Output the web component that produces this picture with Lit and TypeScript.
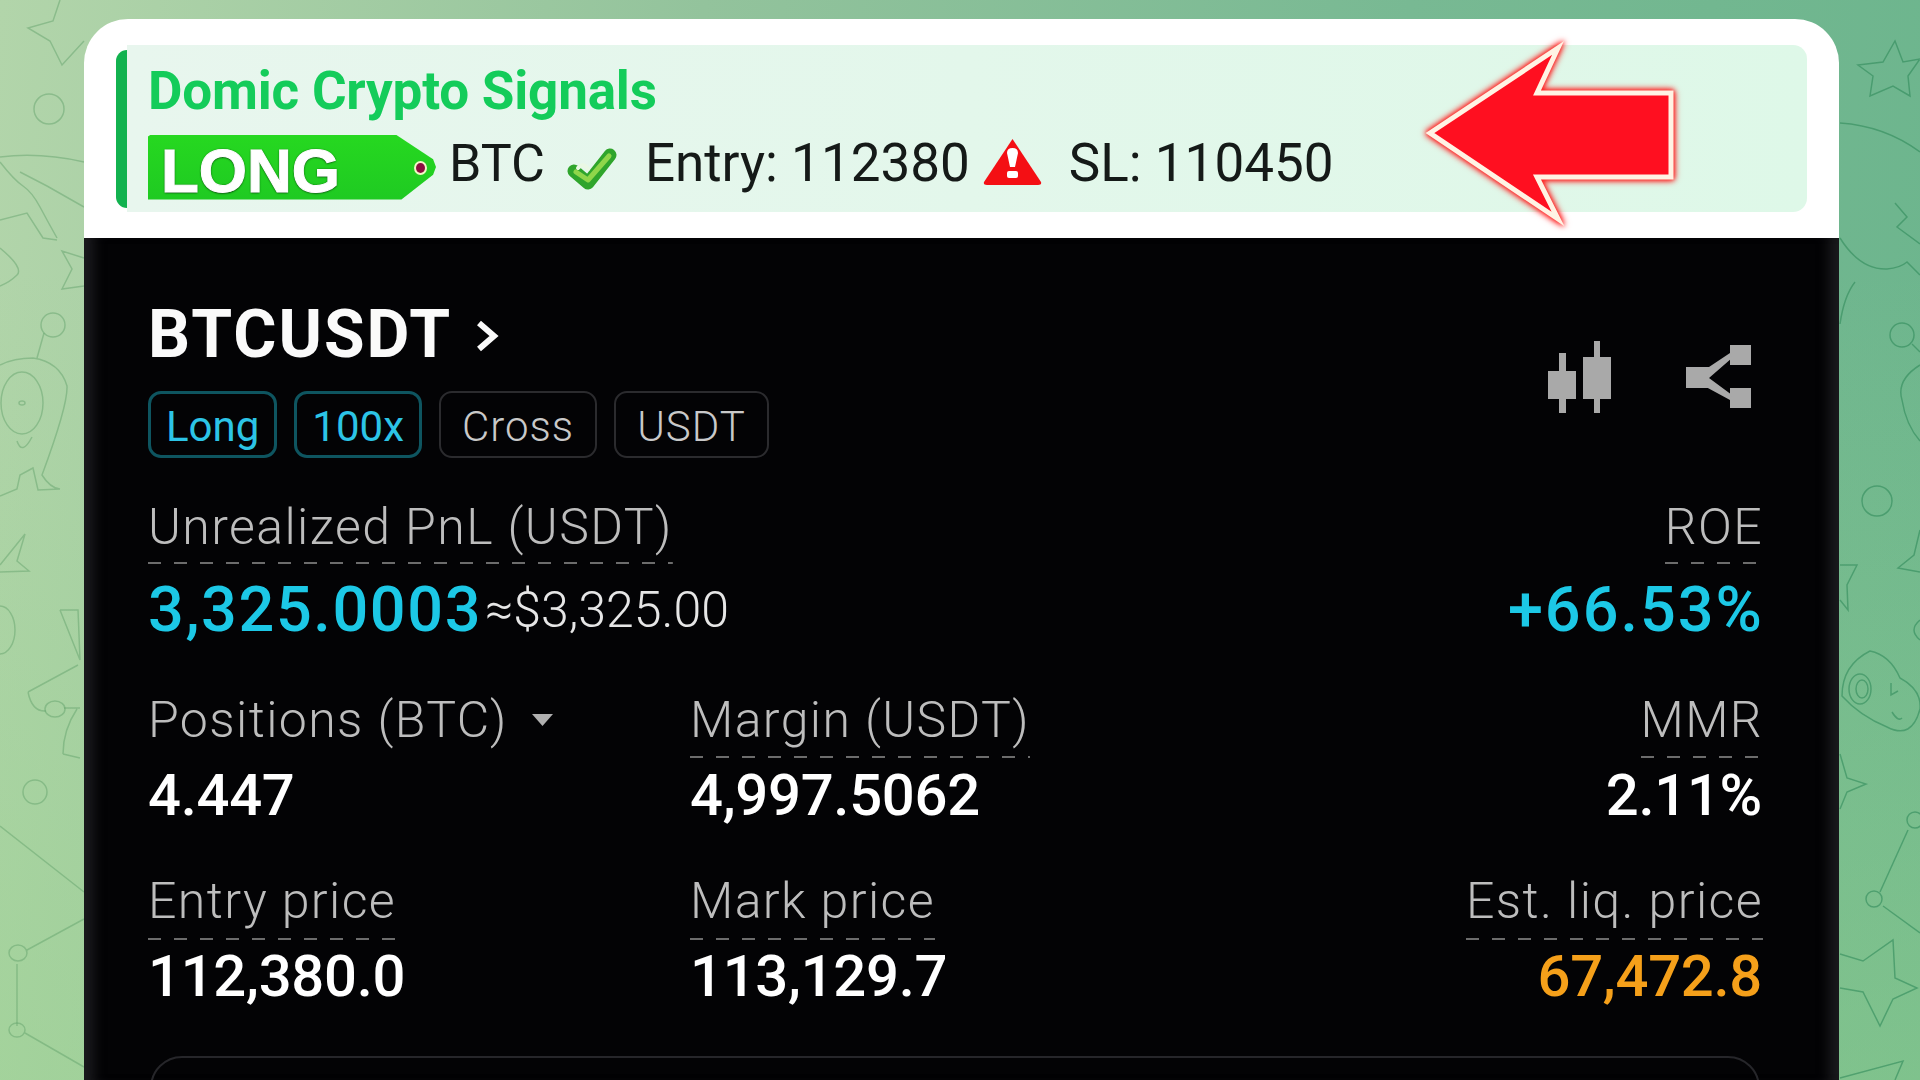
import { LitElement, html, css, svg } from "lit";
import { customElement } from "lit/decorators.js";

// hand traced doodles of the chat wallpaper, only the strips beside the card show
const doodleLines = [
  "M60 0 53 21 28 28 50 41 62 65 84 41",
  "M0 157Q40 152 84 162",
  "M0 162Q14 180 23 186T40 207 57 238",
  "M20 172 47 186 84 207",
  "M0 220 27 213 43 238 57 240",
  "M0 248Q24 268 17 275T0 286",
  "M84 258 62 251 72 269 62 289 84 286",
  "M44 333 37 358",
  "M0 365Q14 358 33 358 60 362 67 386 68 405 42 475 50 488 60 489L38 490 33 468 20 475 17 489 0 496",
  "M17 441Q22 456 32 437",
  "M0 565 25 534 17 561 29 571 0 572",
  "M60 610H78L80 660 60 610",
  "M28 692 78 665M28 692Q32 712 46 711M64 708H80M63 754Q63 730 77 709M63 754 80 758",
  "M0 826 84 892",
  "M27 950 84 919",
  "M17 964V1026",
  "M25 1033 84 1067",
  "M1858 65 1883 62 1895 41 1903 62 1920 59 1908 76 1910 96 1893 86 1870 96 1873 76Z",
  "M1840 123Q1885 126 1920 152",
  "M1895 203 1907 217 1897 227 1920 244",
  "M1840 238Q1860 270 1887 269 1900 268 1907 262L1920 275",
  "M1840 324Q1844 296 1855 282",
  "M1912 344 1920 352",
  "M1920 365Q1896 380 1902 400 1906 425 1920 441",
  "M1840 565H1857L1847 585 1848 610 1840 600",
  "M1920 530 1914 555 1898 568 1920 572",
  "M1920 620Q1908 630 1920 640",
  "M1842 696Q1842 665 1870 651 1890 655 1900 678 1922 690 1920 709 1912 740 1887 727 1860 716 1842 696Z",
  "M1891 683V695L1898 691M1892 712Q1898 722 1902 718",
  "M1840 754 1847 778 1866 784 1847 792 1840 809",
  "M1908 830 1880 892",
  "M1883 906 1920 933",
  "M1840 954 1863 961 1893 940 1895 978 1917 988 1893 999 1880 1026 1863 992 1840 988",
  "M1840 1078 1903 1061 1895 1080",
];

const doodleRings = [
  [49, 109, 15, 15],
  [53, 325, 12, 12],
  [22, 403, 21, 31],
  [22, 403, 3, 2],
  [0, 630, 15, 24],
  [55, 709, 10, 8],
  [35, 792, 12, 12],
  [18, 953, 9, 8],
  [17, 1030, 8, 7],
  [1902, 335, 12, 12],
  [1877, 501, 15, 15],
  [1860, 689, 11, 15],
  [1862, 689, 6, 9],
  [1915, 820, 8, 8],
  [1874, 899, 8, 8],
];

const chips = [
  { text: "Long", active: true },
  { text: "100x", active: true },
  { text: "Cross", active: false },
  { text: "USDT", active: false },
];

@customElement("app-root")
export class AppRoot extends LitElement {
  static styles = css`
    :host {
      display: block;
      position: relative;
      width: 1920px;
      height: 1080px;
      overflow: hidden;
      box-sizing: border-box;
      padding: 19px 81px 0 84px;
      font-family: Roboto, "Liberation Sans", sans-serif;
      background:
        linear-gradient(180deg, rgba(150, 210, 140, 0) 25%, rgba(150, 210, 140, 0.45) 100%),
        linear-gradient(95deg, #b2d5aa 0%, #93c39c 35%, #78b993 70%, #6cb58d 100%);
    }
    .wallpaper {
      position: absolute;
      inset: 0;
      width: 1920px;
      height: 1080px;
      fill: none;
      stroke-width: 1.5;
    }
    .card {
      position: relative;
      height: 1061px;
      border-radius: 44px 44px 0 0;
      overflow: hidden;
      display: flex;
      flex-direction: column;
    }
    .head {
      position: relative;
      height: 219px;
      box-sizing: border-box;
      padding: 26px 32px 26px 32px;
      background: #fff;
      display: flex;
      align-items: center;
    }
    .bar {
      flex: none;
      width: 11px;
      height: 158px;
      background: #12b24f;
      border-radius: 12px 0 0 12px;
    }
    .quote {
      flex: 1;
      height: 167px;
      box-sizing: border-box;
      padding: 17px 0 0 21px;
      background: linear-gradient(90deg, #e8f6ee, #def8e8);
      border-radius: 0 14px 14px 0;
    }
    .sender {
      font-size: 53px;
      line-height: 58px;
      font-weight: 700;
      color: #14cc5a;
      letter-spacing: -0.2px;
    }
    .msg {
      display: flex;
      align-items: center;
      height: 68px;
      margin-top: 9px;
      font-size: 53px;
      color: #151a18;
    }
    .tag {
      position: relative;
      flex: none;
      width: 288px;
      height: 65px;
      margin-top: 8px;
      box-sizing: border-box;
      padding: 0 0 0 13px;
      background: linear-gradient(180deg, #26d820, #1fca22);
      clip-path: polygon(0 3%, 1% 0, 86% 0, 99% 38%, 100% 50%, 99% 62%, 88% 100%, 0 100%);
      font-family: "Liberation Sans", Arial, sans-serif;
      font-size: 62px;
      line-height: 71px;
      font-weight: 700;
      color: #fff;
      -webkit-text-stroke: 1px #fff;
      text-shadow: 0 0 2px #0d4a12, 0 1px 2px #0d4a12;
    }
    .tag i {
      position: absolute;
      right: 11px;
      top: 28px;
      width: 9px;
      height: 10px;
      border-radius: 50%;
      background: #8a1040;
      box-shadow: 0 0 0 2px #f4f7c8;
    }
    .btc {
      margin-left: 13px;
      font-size: 52px;
    }
    .check {
      flex: none;
      width: 50px;
      height: 44px;
      margin: 12px 28px 0 22px;
    }
    .warn {
      flex: none;
      width: 59px;
      height: 47px;
      margin: 0 27px 4px 13px;
    }
    .arrow {
      position: absolute;
      left: 1330px;
      top: 8px;
      width: 260px;
      height: 200px;
      overflow: visible;
      filter: drop-shadow(0 0 3px #ff2020) drop-shadow(0 0 2px #ff2020);
    }
    .panel {
      flex: 1;
      box-sizing: border-box;
      padding: 54px 77px 0 64px;
      background: #030305;
      box-shadow: inset 18px 0 12px -8px #1a1a1d, inset -18px 0 12px -8px #1a1a1d;
      display: flex;
      flex-direction: column;
      position: relative;
    }
    .top {
      display: flex;
      justify-content: space-between;
    }
    .title {
      display: flex;
      align-items: center;
      height: 84px;
      font-size: 66px;
      font-weight: 700;
      color: #fafafa;
      letter-spacing: 2px;
    }
    .chev {
      width: 24px;
      height: 32px;
      margin: 4px 0 0 23px;
    }
    .chips {
      display: flex;
      gap: 17px;
      margin-top: 15px;
    }
    .chip {
      box-sizing: border-box;
      height: 67px;
      padding: 0 21px;
      border: 2px solid #2b2b2e;
      border-radius: 13px;
      font-size: 42px;
      line-height: 67px;
      font-weight: 300;
      color: #c9c9c9;
      letter-spacing: 1px;
    }
    .chip.on {
      padding: 0 15px;
      border: 3px solid #0e5560;
      line-height: 65px;
      color: #2cc4e6;
      font-weight: 400;
      letter-spacing: 0;
    }
    .tools {
      display: flex;
      gap: 75px;
      margin: 49px 11px 0 0;
    }
    .tools .share {
      margin-top: 4px;
    }
    .stats {
      display: grid;
      grid-template-columns: 542px 1fr auto;
      row-gap: 48px;
      margin-top: 43px;
    }
    .wide {
      grid-column: span 2;
    }
    .cell {
      display: flex;
      flex-direction: column;
      align-items: flex-start;
    }
    .cell.end {
      align-items: flex-end;
    }
    .cell.end .label {
      margin-right: -1px;
    }
    .label {
      display: flex;
      align-items: center;
      height: 52px;
      padding-bottom: 11px;
      font-size: 50px;
      line-height: 52px;
      font-weight: 300;
      color: #bdbdbd;
      letter-spacing: 1.4px;
      background: repeating-linear-gradient(90deg, #6c6c6c 0 13px, transparent 13px 26px) bottom / 100% 2px no-repeat;
    }
    .label.plain {
      background: none;
    }
    .label svg {
      width: 21px;
      height: 12px;
      margin-left: 24px;
    }
    .value {
      margin-top: 5px;
      font-size: 58px;
      line-height: 64px;
      font-weight: 500;
      letter-spacing: -0.3px;
      color: #fff;
      white-space: nowrap;
    }
    .r2 .label {
      margin-top: 4px;
      padding-bottom: 12px;
    }
    .r3 .label {
      padding-bottom: 13px;
    }
    .r3 .value {
      margin-top: 4px;
    }
    .big {
      margin-top: 14px;
      font-size: 63px;
      font-weight: 500;
      letter-spacing: 1.6px;
      color: #1cc8e6;
    }
    .cell.end .big {
      letter-spacing: 2px;
      margin-right: -2px;
    }
    .big small {
      margin-left: 3px;
      font-size: 50px;
      font-weight: 300;
      letter-spacing: 0;
      color: #e6e6e6;
      vertical-align: 4px;
    }
    .orange {
      color: #f5a01a;
    }
    .box {
      position: absolute;
      left: 66px;
      right: 79px;
      top: 818px;
      height: 80px;
      border: 2px solid #26262a;
      border-radius: 32px 32px 0 0;
    }
  `;

  private cell(
    label: string,
    value: unknown,
    opts: { end?: boolean; plain?: boolean; row?: string; valueClass?: string; extra?: unknown } = {}
  ) {
    return html`
      <div class="cell ${opts.end ? "end" : ""} ${opts.row ?? ""}">
        <div class="label ${opts.plain ? "plain" : ""}">${label}${opts.extra}</div>
        <div class="value ${opts.valueClass ?? ""}">${value}</div>
      </div>
    `;
  }

  render() {
    return html`
      <svg class="wallpaper" viewBox="0 0 1920 1080">
        <defs>
          <linearGradient id="ink" gradientUnits="userSpaceOnUse" x1="0" y1="0" x2="1920" y2="0">
            <stop offset="0" stop-color="#5f9f68" stop-opacity="0.45"></stop>
            <stop offset="1" stop-color="#2f8a5a" stop-opacity="0.6"></stop>
          </linearGradient>
        </defs>
        <g stroke="url(#ink)">
          ${doodleLines.map((d) => svg`<path d=${d}></path>`)}
          ${doodleRings.map(([cx, cy, rx, ry]) => svg`<ellipse cx=${cx} cy=${cy} rx=${rx} ry=${ry}></ellipse>`)}
        </g>
      </svg>
      <div class="card">
        <div class="head">
          <div class="bar"></div>
          <div class="quote">
            <div class="sender">Domic Crypto Signals</div>
            <div class="msg">
              <div class="tag">LONG<i></i></div>
              <span class="btc">BTC</span>
              <svg class="check" viewBox="0 0 50 44" fill="none" stroke-linecap="round" stroke-linejoin="round">
                <path d="M7 24 21 36 43 8" stroke="#2fa52c" stroke-width="13"></path>
                <path d="M9 25 21 33 42 9" stroke="#8fd64a" stroke-width="5"></path>
                <path d="M11 21Q16 15 21 22" stroke="#eaf8e4" stroke-width="4"></path>
              </svg>
              <span>Entry: 112380</span>
              <svg class="warn" viewBox="0 0 59 47">
                <path d="M29.500 1 58 44Q59 47 55 47H4Q0 47 1 44Z" fill="#f40f14"></path>
                <path d="M24 15Q24 10 29.500 10 35 10 35 15L32 29H27Z" fill="#fff"></path>
                <rect x="24" y="33" width="11" height="7" rx="2" fill="#fff"></rect>
              </svg>
              <span>SL: 110450</span>
            </div>
          </div>
          <svg class="arrow" viewBox="0 0 260 200">
            <path
              d="M16 106 144 21 123 66H257V150H123L144 192Z"
              fill="#ff0f20"
              stroke="#fff3e4"
              stroke-width="5"
              stroke-linejoin="miter"
            ></path>
          </svg>
        </div>
        <div class="panel">
          <div class="top">
            <div>
              <div class="title">
                BTCUSDT
                <svg class="chev" viewBox="0 0 24 32">
                  <path d="M4 3 19 16 4 29" fill="none" stroke="#fafafa" stroke-width="6"></path>
                </svg>
              </div>
              <div class="chips">
                ${chips.map((c) => html`<div class="chip ${c.active ? "on" : ""}">${c.text}</div>`)}
              </div>
            </div>
            <div class="tools">
              <svg width="63" height="72" viewBox="0 0 63 72" fill="#a9a9a9">
                <rect x="11" y="12" width="7" height="60"></rect>
                <rect x="0" y="30" width="28" height="28"></rect>
                <rect x="46" y="0" width="6" height="72"></rect>
                <rect x="35" y="16" width="28" height="42"></rect>
              </svg>
              <svg class="share" width="65" height="63" viewBox="0 0 65 63" fill="#a9a9a9">
                <rect x="0" y="22" width="23" height="21"></rect>
                <rect x="44" y="0" width="21" height="20"></rect>
                <rect x="44" y="43" width="21" height="20"></rect>
                <path d="M20 24 44 8 46 13 23 33ZM23 33 46 50 44 55 20 42Z"></path>
              </svg>
            </div>
          </div>
          <div class="stats">
            <div class="wide">
              ${this.cell("Unrealized PnL (USDT)", html`3,325.0003<small>≈$3,325.00</small>`, { valueClass: "big" })}
            </div>
            ${this.cell("ROE", "+66.53%", { end: true, valueClass: "big" })}
            ${this.cell("Positions (BTC)", "4.447", {
              plain: true,
              row: "r2",
              extra: html`<svg viewBox="0 0 21 12"><path d="M0 0H21L10.500 12Z" fill="#b0b0b0"></path></svg>`,
            })}
            ${this.cell("Margin (USDT)", "4,997.5062", { row: "r2" })}
            ${this.cell("MMR", "2.11%", { end: true, row: "r2" })}
            ${this.cell("Entry price", "112,380.0", { row: "r3" })}
            ${this.cell("Mark price", "113,129.7", { row: "r3" })}
            ${this.cell("Est. liq. price", "67,472.8", { end: true, valueClass: "orange", row: "r3" })}
          </div>
          <div class="box"></div>
        </div>
      </div>
    `;
  }
}
